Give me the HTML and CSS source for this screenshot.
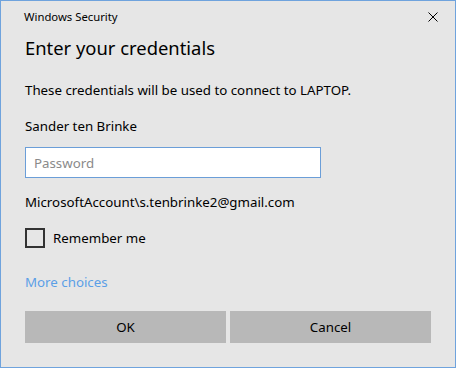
FILE: index.html
```html
<!DOCTYPE html>
<html>
<head>
<meta charset="utf-8">
<link rel="stylesheet" href="styles.css">
</head>
<body>
<div class="window">
  <div class="titlebar">
    <span class="title">Windows Security</span>
    <svg class="close" width="10" height="10" viewBox="0 0 10 10"><path d="M0.5 0.5 L9.5 9.5 M9.5 0.5 L0.5 9.5" stroke="#000" stroke-width="1" fill="none"/></svg>
  </div>
  <div class="content">
    <h1 class="heading">Enter your credentials</h1>
    <p class="text info">These credentials will be used to connect to LAPTOP.</p>
    <p class="text user">Sander ten Brinke</p>
    <div class="input"><span class="placeholder">Password</span></div>
    <p class="text account">MicrosoftAccount\s.tenbrinke2@gmail.com</p>
    <div class="check-row">
      <span class="checkbox"></span>
      <span class="text">Remember me</span>
    </div>
    <a class="link">More choices</a>
    <div class="buttons">
      <div class="btn">OK</div>
      <div class="btn">Cancel</div>
    </div>
  </div>
</div>
</body>
</html>
```
FILE: styles.css
```css
* { box-sizing: border-box; }
html, body { margin: 0; padding: 0; }
body {
  width: 456px;
  height: 368px;
  font-family: "Noto Sans", "Open Sans", sans-serif;
  color: #000;
  background: #e6e6e6;
}
.window {
  width: 456px;
  height: 368px;
  border: 1px solid #6fa3dd;
  background: #e6e6e6;
  display: flex;
  flex-direction: column;
}
.titlebar {
  height: 33px;
  display: flex;
  align-items: flex-start;
  justify-content: space-between;
  padding: 7px 17px 0 23px;
}
.title {
  font-size: 11.3px;
  line-height: 18px;
}
.close {
  margin-top: 4px;
  display: block;
}
.content {
  padding: 0 24px 0 24px;
  display: flex;
  flex-direction: column;
}
.heading {
  margin: 0;
  font-weight: normal;
  font-size: 18.4px;
  line-height: 28px;
}
.text {
  margin: 0;
  font-size: 13.3px;
  line-height: 20px;
}
.info { margin-top: 18px; }
.user { margin-top: 16px; }
.input {
  margin-top: 11px;
  width: 296px;
  height: 31px;
  border: 1px solid #6b9ed8;
  background: #fff;
  display: flex;
  align-items: center;
  padding-left: 8px;
}
.placeholder {
  font-size: 13.3px;
  color: #8a8a8a;
}
.account { margin-top: 14px; }
.check-row {
  margin-top: 16px;
  display: flex;
  align-items: center;
  gap: 8px;
}
.checkbox {
  width: 20px;
  height: 20px;
  border: 2px solid #333;
  display: block;
}
.link {
  margin-top: 24px;
  font-size: 13.3px;
  line-height: 20px;
  color: #5b9fe6;
}
.buttons {
  margin-top: 19px;
  display: flex;
  gap: 4px;
}
.btn {
  width: 201px;
  height: 32px;
  background: #b8b8b8;
  font-size: 13.3px;
  display: flex;
  align-items: center;
  justify-content: center;
}
```
